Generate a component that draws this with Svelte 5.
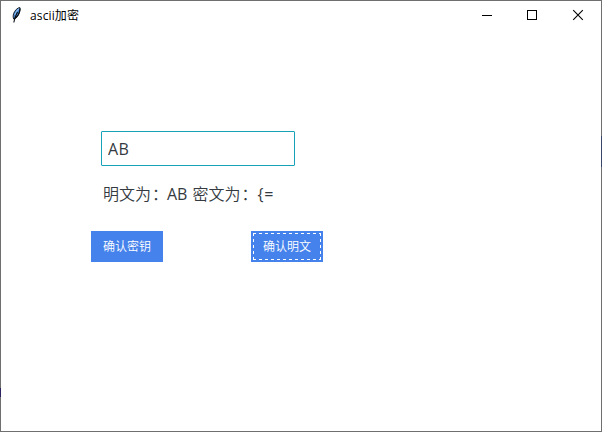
<script>
  let plain = $state('AB');
  let title = 'ascii加密';
</script>

<main class="window">
  <header>
    <svg class="feather" width="12" height="18" viewBox="0 0 12 18">
      <path d="M8.800 1.500C6.500 1.800 3.600 4.500 2.600 7.700c-.6 2-.6 4 .1 5.300 2.200-.8 4.600-2.800 5.600-6.100C9 4.800 9.500 3 8.800 1.500z" fill="#3d7fca" stroke="#1b222c" stroke-width="1" />
      <path d="M7.800 2.800C6 4.500 4.500 6.500 3.800 9" fill="none" stroke="#8fbdf0" stroke-width="1.200" />
      <path d="M9 2.500C8.900 6 7 10 4 12.500M6.500 6C4.800 9 3.500 12 2.800 16.500" fill="none" stroke="#0c0f14" stroke-width="1.100" />
    </svg>
    <span class="title">{title}</span>
    <div class="controls">
      <svg width="46" height="29" viewBox="0 0 46 29" shape-rendering="crispEdges"><path d="M19 14.500h10" stroke="#000" /></svg>
      <svg width="46" height="29" viewBox="0 0 46 29" shape-rendering="crispEdges"><rect x="18.500" y="9.500" width="9" height="9" fill="none" stroke="#000" /></svg>
      <svg width="46" height="29" viewBox="0 0 46 29"><path d="M18.200 9.200l9.600 9.600M27.800 9.200l-9.600 9.600" stroke="#000" stroke-width="1.100" /></svg>
    </div>
  </header>
  <section class="form">
    <div class="field"><input type="text" bind:value={plain} spellcheck="false" /></div>
    <p><span class="cjk">明文为<i>：</i></span><span class="latin">AB</span><span class="cjk">密文为<i>：</i></span><span class="latin wide">{'{='}</span></p>
    <div class="actions">
      <button>确认密钥</button>
      <button class="focused">确认明文</button>
    </div>
  </section>
</main>

<style>
  :global(body) { margin: 0; background: #fff; }
  .window {
    box-sizing: border-box;
    width: 602px;
    height: 432px;
    border: 1px solid transparent;
    background:
      linear-gradient(#fff, #fff) padding-box,
      linear-gradient(#2a2360, #2a2360) 0 388px / 1px 9px no-repeat border-box,
      linear-gradient(#39456b, #39456b) 100% 136px / 1px 31px no-repeat border-box,
      linear-gradient(#6f6f6f, #6f6f6f) border-box;
    overflow: hidden;
    font-family: "Open Sans", "Noto Sans CJK SC", sans-serif;
  }
  header { display: flex; height: 30px; align-items: flex-start; }
  .feather { margin: 5px 0 0 10px; flex: none; }
  .title {
    margin-left: 7px;
    font-size: 12px;
    line-height: 29px;
    letter-spacing: 0.12px;
    color: #000;
    white-space: nowrap;
  }
  .controls { display: flex; margin-left: auto; }
  .controls svg { display: block; }
  .form { padding: 100px 0 0 90px; }
  .field { padding-left: 10px; height: 35px; }
  input {
    box-sizing: border-box;
    display: block;
    width: 194px;
    height: 35px;
    padding: 1px 6px 0;
    border: 1px solid #17a2b8;
    border-radius: 1px;
    outline: none;
    font: 16px "Open Sans", sans-serif;
    letter-spacing: 0.3px;
    color: #343a40;
  }
  p {
    display: flex;
    margin: 16px 0 0 12px;
    height: 24px;
    line-height: 24px;
    font-size: 16px;
    color: #343a40;
    white-space: nowrap;
  }
  .cjk { width: 64px; font-weight: 350; }
  .cjk i { margin-left: 1px; font-style: normal; }
  .latin + .cjk { margin-left: 5px; }
  .wide { letter-spacing: 0.8px; padding-left: 1px; }
  .actions { display: flex; gap: 88px; margin-top: 25px; }
  button {
    position: relative;
    width: 72px;
    height: 31px;
    padding: 0 0 1px;
    border: 0;
    background: #4582ec;
    color: #fff;
    font: 350 12px/30px "Noto Sans CJK SC", sans-serif;
  }
  .focused::after {
    content: "";
    position: absolute;
    inset: 2px;
    background:
      repeating-linear-gradient(90deg, #fff 0 3px, transparent 3px 6px) 0 0 / 100% 1px no-repeat,
      repeating-linear-gradient(90deg, #fff 0 3px, transparent 3px 6px) 0 100% / 100% 1px no-repeat,
      repeating-linear-gradient(#fff 0 3px, transparent 3px 6px) 0 0 / 1px 100% no-repeat,
      repeating-linear-gradient(#fff 0 3px, transparent 3px 6px) 100% 0 / 1px 100% no-repeat;
  }
</style>
